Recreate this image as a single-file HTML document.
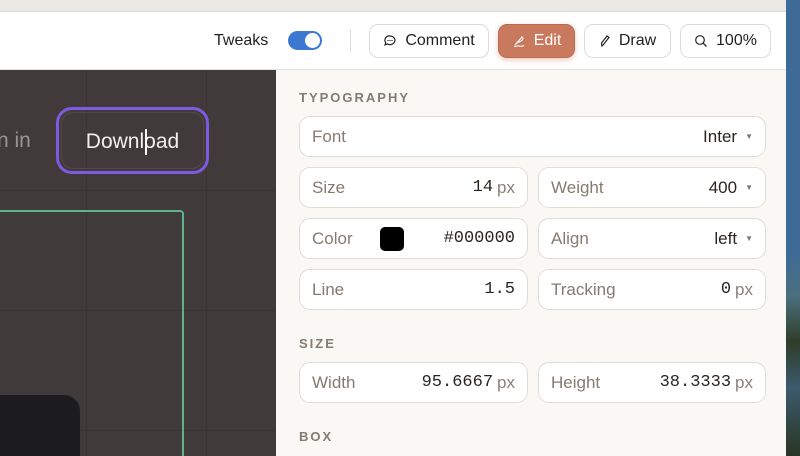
<!DOCTYPE html><html><head><style>
*{box-sizing:border-box;margin:0;padding:0}
html,body{width:800px;height:456px;overflow:hidden}
body{position:relative;font-family:"Liberation Sans",sans-serif;background:#f9f8f5}
.abs{position:absolute}
.top{left:0;top:0;width:786px;height:12px;background:#ebe9e5;border-bottom:1px solid #dcd9d3}
.bar{left:0;top:12px;width:786px;height:58px;background:#fff;border-bottom:1px solid #e4e1dc}
.btn{position:absolute;top:24px;height:34px;border:1px solid #dedbd5;border-radius:9px;background:#fff;font-size:16px;color:#222;display:flex;align-items:center;justify-content:center;gap:8px}
.canvas{left:0;top:70px;width:276px;height:386px;background:#413a3a;overflow:hidden}
.panel{left:276px;top:70px;width:510px;height:386px;background:#f9f8f5}
.f{position:absolute;height:41px;background:#fff;border:1px solid #e2ddd4;border-radius:11px;display:flex;align-items:center;padding:0 12px;font-size:17px;color:#857b70}
.f .v{margin-left:auto;color:#2a2520}
.mono{font-family:"Liberation Mono",monospace;font-size:17px}
.px{color:#8a8178;margin-left:4px}
.ar{font-size:8px;color:#777;margin-left:8px}
.lbl{position:absolute;left:299px;font-size:13px;letter-spacing:2px;color:#857b70;font-weight:bold}
.gl{position:absolute;background:#3a3434}
</style></head><body>
<div class="abs top"></div>
<div class="abs bar">
<div class="abs" style="left:214px;top:20px;font-size:16px;color:#222">Tweaks</div>
<div class="abs" style="left:288px;top:19px;width:34px;height:19px;border-radius:10px;background:#3c78d0"><div class="abs" style="right:2px;top:2px;width:15px;height:15px;border-radius:50%;background:#fff"></div></div>
<div class="abs" style="left:350px;top:17px;width:1px;height:23px;background:#e0ddd8"></div>
</div>
<div class="btn" style="left:369px;width:120px"><svg width="14" height="14" viewBox="0 0 14 14"><path d="M7 2a5 4.3 0 1 1-2.6 8l-2.4.8.8-2A4.3 4.3 0 0 1 7 2z" fill="none" stroke="#222" stroke-width="1.2"/><circle cx="5" cy="6.5" r=".6"/><circle cx="7" cy="6.5" r=".6"/><circle cx="9" cy="6.5" r=".6"/></svg>Comment</div>
<div class="btn" style="left:498px;width:77px;background:#c97a5e;border-color:#b96a50;color:#fff;box-shadow:0 2px 6px rgba(201,122,94,.4)"><svg width="14" height="14" viewBox="0 0 14 14"><path d="M3 11L10 3c1.5 1 1 3-1 4L5 9M2 12.5c2 0 3-1 5-.5s3 .5 5-.5" fill="none" stroke="#fff" stroke-width="1.1"/></svg>Edit</div>
<div class="btn" style="left:584px;width:87px"><svg width="12" height="14" viewBox="0 0 12 14"><path d="M3 12L2.5 9 8 2l2 1.5-5.5 7z" fill="none" stroke="#222" stroke-width="1.2"/></svg>Draw</div>
<div class="btn" style="left:680px;width:91px"><svg width="14" height="14" viewBox="0 0 14 14"><circle cx="6" cy="6" r="4.3" fill="none" stroke="#222" stroke-width="1.2"/><path d="M9.2 9.2L12.5 12.5" stroke="#222" stroke-width="1.3"/></svg>100%</div>
<div class="abs canvas">
<div class="gl" style="left:86px;top:0;width:1px;height:386px"></div>
<div class="gl" style="left:206px;top:0;width:1px;height:386px"></div>
<div class="gl" style="left:0;top:120px;width:276px;height:1px"></div>
<div class="gl" style="left:0;top:240px;width:276px;height:1px"></div>
<div class="gl" style="left:0;top:360px;width:276px;height:1px"></div>
<div class="abs" style="left:-3px;top:59px;font-size:21px;color:#9a9494;white-space:nowrap">n in</div>
<div class="abs" style="left:56px;top:37px;width:153px;height:67px;border:3px solid #7b5ce0;border-radius:16px"><div class="abs" style="left:2px;top:2px;right:2px;bottom:2px;border:1px solid #4e4a4e;border-radius:12px"></div>
<div class="abs" style="left:0;right:0;top:20px;text-align:center;font-size:21px;color:#f2f0ee">Download</div>
<div class="abs" style="left:86px;top:19px;width:2px;height:26px;background:#fff"></div></div>
<div class="abs" style="left:-20px;top:140px;width:204px;height:300px;border:2px solid #5fb38a;border-radius:4px"></div>
<div class="abs" style="left:-40px;top:325px;width:120px;height:61px;background:#1c1c20;border-radius:16px 16px 0 0"></div>
</div>
<div class="abs panel"></div>
<div class="abs" style="left:786px;top:0;width:14px;height:456px;background:linear-gradient(#3e6a97 0,#3e6a97 55%,#4a6f7e 65%,#2f3d28 75%,#3c5a6e 85%,#2a3524 100%)"></div>
<div class="lbl" style="top:90px">TYPOGRAPHY</div>
<div class="f" style="left:299px;top:116px;width:467px">Font<span class="v">Inter</span><span class="ar">▼</span></div>
<div class="f" style="left:299px;top:167px;width:229px">Size<span class="v mono">14</span><span class="px">px</span></div>
<div class="f" style="left:538px;top:167px;width:228px">Weight<span class="v">400</span><span class="ar">▼</span></div>
<div class="f" style="left:299px;top:218px;width:229px">Color<span style="position:absolute;left:80px;top:8px;width:24px;height:24px;background:#000;border-radius:5px"></span><span class="v mono">#000000</span></div>
<div class="f" style="left:538px;top:218px;width:228px">Align<span class="v">left</span><span class="ar">▼</span></div>
<div class="f" style="left:299px;top:269px;width:229px">Line<span class="v mono">1.5</span></div>
<div class="f" style="left:538px;top:269px;width:228px">Tracking<span class="v mono">0</span><span class="px">px</span></div>
<div class="lbl" style="top:336px">SIZE</div>
<div class="f" style="left:299px;top:362px;width:229px">Width<span class="v mono">95.6667</span><span class="px">px</span></div>
<div class="f" style="left:538px;top:362px;width:228px">Height<span class="v mono">38.3333</span><span class="px">px</span></div>
<div class="lbl" style="top:429px">BOX</div>
</body></html>
